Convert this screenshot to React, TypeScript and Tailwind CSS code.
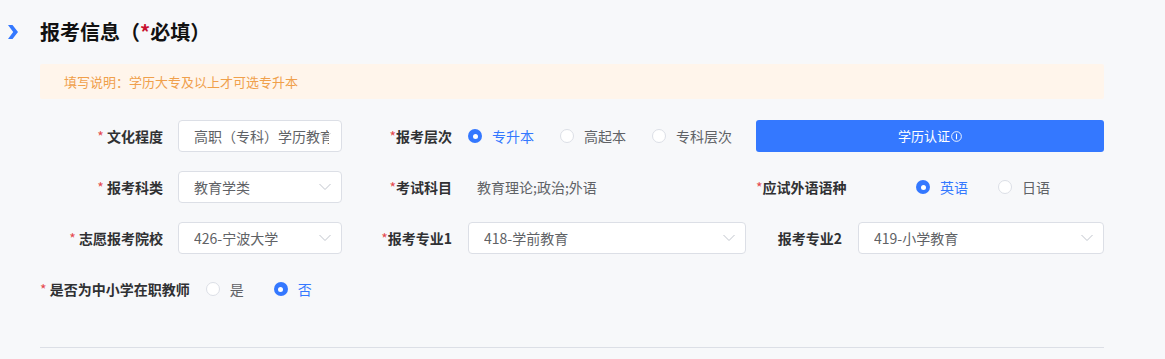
import { ReactNode } from 'react';

const Star = ({ space = false }: { space?: boolean }) => (
    <span className="text-[#e5484d] font-normal">{space ? '* ' : '*'}</span>
);

function Label({ children, width, star = true, space = false, align = 'right' }: {
    children: ReactNode; width: string; star?: boolean; space?: boolean; align?: 'right' | 'left';
}) {
    return (
        <div className={`${width} ${align === 'right' ? 'text-right' : 'text-left'} shrink-0 text-[14px] font-bold text-[#303133] whitespace-nowrap`}>
            {star && <Star space={space} />}
            {children}
        </div>
    );
}

const Chevron = () => (
    <svg width="12" height="7" viewBox="0 0 12 7" className="absolute right-[10px] top-1/2 -translate-y-1/2">
        <path d="M0.5 0.5 L6 6 L11.5 0.5" fill="none" stroke="#c0c4cc" strokeWidth="1" />
    </svg>
);

function Select({ value, width }: { value: string; width: string }) {
    return (
        <div className={`${width} relative h-[32px] shrink-0 rounded-[4px] border border-[#dcdfe6] bg-white pl-[15px] pr-[12px] flex items-center overflow-hidden`}>
            <span className="text-[14px] text-[#606266] whitespace-nowrap overflow-hidden">{value}</span>
            <Chevron />
        </div>
    );
}

function Radio({ label, checked, gap }: { label: string; checked?: boolean; gap: string }) {
    return (
        <div className={`flex items-center ${gap}`}>
            {checked ? (
                <span className="w-[14px] h-[14px] rounded-full bg-[#3478ff] flex items-center justify-center">
                    <span className="w-[5px] h-[5px] rounded-full bg-white" />
                </span>
            ) : (
                <span className="w-[14px] h-[14px] rounded-full border border-[#dcdfe6] bg-white" />
            )}
            <span className={`ml-[10px] text-[14px] ${checked ? 'text-[#3478ff]' : 'text-[#606266]'}`}>{label}</span>
        </div>
    );
}

export default function App() {
    return (
        <div className="w-full h-[359px] bg-[#f7f8fa] overflow-hidden font-['Noto_Sans_CJK_SC',sans-serif]">
            {/* Header */}
            <div className="flex items-center pl-[8px] pt-[20px] h-[44px]">
                <svg width="10" height="14" viewBox="0 0 10 14">
                    <path d="M0 0 H4.5 L10 7 L4.5 14 H0 L5.2 7 Z" fill="#3478ff" />
                </svg>
                <h2 className="ml-[22px] text-[20px] leading-[24px] font-bold text-[#111]">
                    报考信息（<span className="text-[#c8102e]">*</span>必填）
                </h2>
            </div>

            <div className="pl-[40px] w-[1104px]">
                {/* Notice */}
                <div className="mt-[20px] h-[35px] bg-[#fff5eb] rounded-[2px] pl-[24px] flex items-center text-[13px] text-[#f0a04b]">
                    填写说明：学历大专及以上才可选专升本
                </div>

                {/* Row 1 */}
                <div className="mt-[21px] h-[32px] flex items-center">
                    <Label width="w-[123px]" space>文化程度</Label>
                    <div className="ml-[15px]"><Select width="w-[164px]" value="高职（专科）学历教育以上" /></div>
                    <div className="w-[414px] flex items-center">
                        <Label width="w-[110px]">报考层次</Label>
                        <div className="ml-[16px] flex items-center">
                            <Radio label="专升本" checked gap="mr-[26px]" />
                            <Radio label="高起本" gap="mr-[26px]" />
                            <Radio label="专科层次" gap="" />
                        </div>
                    </div>
                    <button className="w-[348px] h-[32px] rounded-[3px] bg-[#3478ff] text-white text-[13px] flex items-center justify-center">
                        学历认证
                        <svg width="11" height="11" viewBox="0 0 12 12" className="ml-[1px]">
                            <circle cx="6" cy="6" r="5.3" fill="none" stroke="white" strokeWidth="1" />
                            <path d="M6 3 V9" stroke="white" strokeWidth="1.2" />
                        </svg>
                    </button>
                </div>

                {/* Row 2 */}
                <div className="mt-[19px] h-[32px] flex items-center">
                    <Label width="w-[123px]" space>报考科类</Label>
                    <div className="ml-[15px]"><Select width="w-[164px]" value="教育学类" /></div>
                    <div className="w-[414px] flex items-center">
                        <Label width="w-[110px]">考试科目</Label>
                        <span className="ml-[25px] text-[14px] text-[#606266]">教育理论;政治;外语</span>
                    </div>
                    <Label width="w-[160px]" align="left">应试外语语种</Label>
                    <div className="flex items-center">
                        <Radio label="英语" checked gap="mr-[30px]" />
                        <Radio label="日语" gap="" />
                    </div>
                </div>

                {/* Row 3 */}
                <div className="mt-[19px] h-[32px] flex items-center">
                    <Label width="w-[123px]" space>志愿报考院校</Label>
                    <div className="ml-[15px]"><Select width="w-[164px]" value="426-宁波大学" /></div>
                    <Label width="w-[110px]">报考专业1</Label>
                    <div className="ml-[16px]"><Select width="w-[278px]" value="418-学前教育" /></div>
                    <Label width="w-[96px]" star={false}>报考专业2</Label>
                    <div className="ml-[16px]"><Select width="w-[246px]" value="419-小学教育" /></div>
                </div>

                {/* Row 4 */}
                <div className="mt-[19px] h-[32px] flex items-center">
                    <div className="text-[14px] font-bold text-[#303133] whitespace-nowrap">
                        <Star space />是否为中小学在职教师
                    </div>
                    <div className="ml-[16px] flex items-center">
                        <Radio label="是" gap="mr-[30px]" />
                        <Radio label="否" checked gap="" />
                    </div>
                </div>

                <div className="mt-[42px] border-t border-[#dcdfe6]" />
            </div>
        </div>
    );
}
